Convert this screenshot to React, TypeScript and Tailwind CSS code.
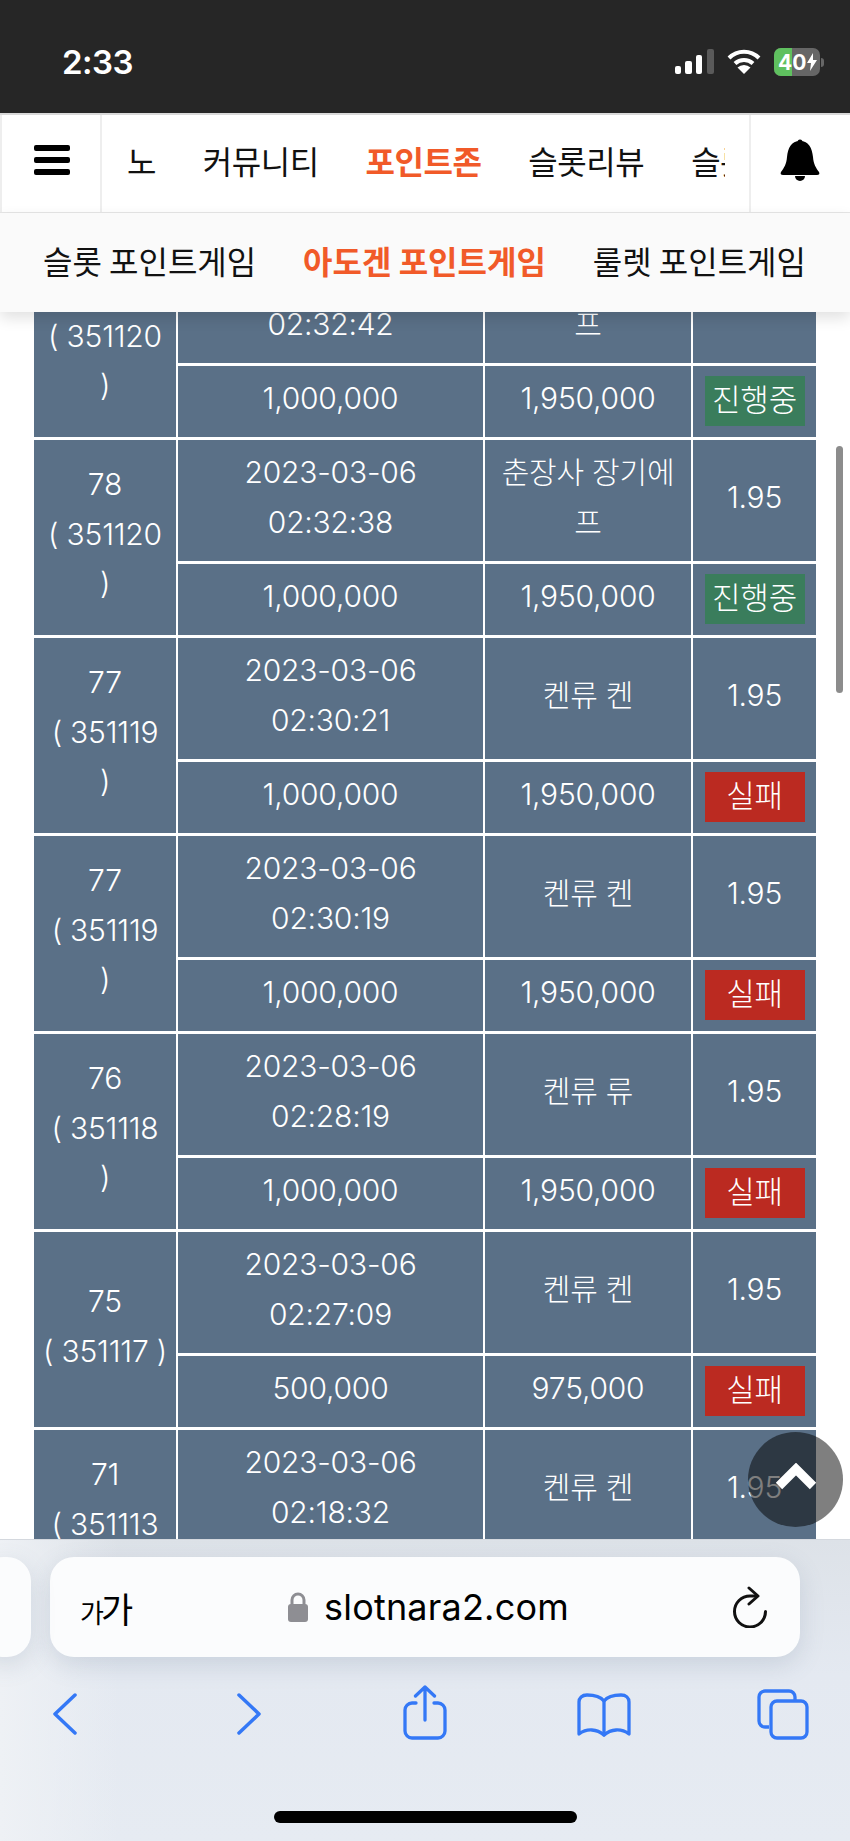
import React from "react";

const KR = "font-['Noto_Sans_CJK_KR','Noto_Sans',sans-serif]";
const NUM = "font-['Inter','Noto_Sans_CJK_KR',sans-serif]";

type Row = { no: string; id: string; date: string; time: string; game: string; bet: string; win: string; state: "진행중" | "실패"; tight?: boolean };

const rows: Row[] = [
  { no: "78", id: "351120", date: "2023-03-06", time: "02:32:42", game: "춘장사 장기에프", bet: "1,000,000", win: "1,950,000", state: "진행중" },
  { no: "78", id: "351120", date: "2023-03-06", time: "02:32:38", game: "춘장사 장기에프", bet: "1,000,000", win: "1,950,000", state: "진행중" },
  { no: "77", id: "351119", date: "2023-03-06", time: "02:30:21", game: "켄류 켄", bet: "1,000,000", win: "1,950,000", state: "실패" },
  { no: "77", id: "351119", date: "2023-03-06", time: "02:30:19", game: "켄류 켄", bet: "1,000,000", win: "1,950,000", state: "실패" },
  { no: "76", id: "351118", date: "2023-03-06", time: "02:28:19", game: "켄류 류", bet: "1,000,000", win: "1,950,000", state: "실패" },
  { no: "75", id: "351117", date: "2023-03-06", time: "02:27:09", game: "켄류 켄", bet: "500,000", win: "975,000", state: "실패", tight: true },
  { no: "71", id: "351113", date: "2023-03-06", time: "02:18:32", game: "켄류 켄", bet: "500,000", win: "975,000", state: "실패" },
];

const cell = "border-x-2 border-y-[3px] border-white bg-[#5a7087] text-center align-middle px-1 pt-[7px] pb-[13px]";

function StatusBar() {
  return (
    <div className="h-[113px] shrink-0 bg-[#262626] flex items-center justify-between pl-[62px] pr-[26px] pt-[11px] text-white">
      <span className="font-['Inter',sans-serif] text-[33px] font-semibold leading-none tracking-[-0.5px]">2:33</span>
      <div className="flex items-center">
        <svg width="40" height="26" viewBox="0 0 40 26" className="mr-[12px]">
          <rect x="0" y="17" width="6" height="8" rx="2" fill="#fff" />
          <rect x="10" y="12" width="7" height="13" rx="2" fill="#fff" />
          <rect x="21" y="6" width="6" height="19" rx="2" fill="#fff" />
          <rect x="32" y="0" width="7" height="25" rx="2" fill="#5a5a5a" />
        </svg>
        <svg width="34" height="26" viewBox="0 0 34 26" className="mr-[13px]">
          <path d="M2 9 A21 21 0 0 1 32 9" stroke="#fff" strokeWidth="4" fill="none" />
          <path d="M8 14.500 A13 13 0 0 1 26 14.500" stroke="#fff" strokeWidth="4" fill="none" />
          <path d="M17 25 L10.500 18.500 A9.500 9.500 0 0 1 23.500 18.500 Z" fill="#fff" />
        </svg>
        <div className="relative flex h-[28px] w-[46px] items-center overflow-hidden rounded-[7px] bg-[#666666]">
          <div className="absolute inset-y-0 left-0 w-[18px] bg-[#5fc05f]" />
          <span className="relative pl-[4px] font-['Inter',sans-serif] text-[21px] font-bold leading-none">40</span>
          <svg width="10" height="18" viewBox="0 0 10 18" className="relative ml-[1px]"><path d="M6 0 L0 10 H4 L3 18 L10 7 H6 Z" fill="#fff" /></svg>
        </div>
        <div className="ml-[1px] h-[9px] w-[3px] rounded-r-full bg-[#666666]" />
      </div>
    </div>
  );
}

function TopNav() {
  return (
    <nav className={`h-[101px] shrink-0 flex border-y-2 border-b-[#e6e6e6] border-t-[#d8d8d8] bg-white ${KR}`}>
      <div className="w-[102px] shrink-0 border-x-2 border-x-[#eeeeee] flex flex-col items-center justify-center gap-[6px] pb-[8px] pl-[1px]">
        <span className="block h-[6px] w-[36px] rounded-[2px] bg-black" />
        <span className="block h-[6px] w-[36px] rounded-[2px] bg-black" />
        <span className="block h-[6px] w-[36px] rounded-[2px] bg-black" />
      </div>
      <div className="flex min-w-0 flex-1 pl-[24px] pr-[24px]">
        <div className="min-w-0 flex-1 overflow-hidden">
          <div className="ml-[-57px] flex h-full items-center gap-[47px] whitespace-nowrap pb-[8px] text-[32px] leading-none tracking-[-0.5px] text-[#111111]">
            <span>카지노</span>
            <span>커뮤니티</span>
            <span className="font-bold text-[#f15a29]">포인트존</span>
            <span>슬롯리뷰</span>
            <span>슬롯후기</span>
          </div>
        </div>
      </div>
      <div className="w-[101px] shrink-0 border-l-2 border-l-[#eeeeee] flex items-center justify-center pb-[8px] pr-[1px]">
        <svg width="40" height="42" viewBox="0 0 40 42">
          <circle cx="20" cy="3" r="2.500" fill="#000" />
          <path d="M20 2 C11 2 8 9 7 18 C6.500 25 4 29 1 33 C0 35 1 36 3 36 H37 C39 36 40 35 39 33 C36 29 33.500 25 33 18 C32 9 29 2 20 2 Z" fill="#000" />
          <path d="M15 37 A5 5 0 0 0 25 37 Z" fill="#000" />
        </svg>
      </div>
    </nav>
  );
}

function SubNav() {
  return (
    <div className={`relative z-10 -mt-[1px] flex h-[99px] shrink-0 items-center justify-between whitespace-nowrap bg-[#fafafa] pb-[5px] pl-[43px] pr-[44px] text-[32px] leading-none text-[#111111] shadow-[0_6px_14px_rgba(0,0,0,0.12)] ${KR}`}>
      <span>슬롯 포인트게임</span>
      <span className="font-bold text-[#f15a29]">아도겐 포인트게임</span>
      <span>룰렛 포인트게임</span>
    </div>
  );
}

function Badge({ state }: { state: Row["state"] }) {
  return (
    <span className={`mx-auto mb-[2px] block h-[50px] w-[100px] text-[31px] leading-[48px] ${state === "실패" ? "bg-[#bb2a21]" : "bg-[#3a7d5c]"}`}>{state}</span>
  );
}

function Table() {
  return (
    <table className={`ml-[32px] mt-[-73px] w-[784px] table-fixed border-collapse text-[30px] font-light leading-[49.500px] tracking-[-0.2px] text-white ${NUM}`}>
      <colgroup>
        <col className="w-[144px]" />
        <col className="w-[307px]" />
        <col className="w-[208px]" />
        <col className="w-[125px]" />
      </colgroup>
      <tbody>
        {rows.map((r, i) => (
          <React.Fragment key={i}>
            <tr className="h-[124px]">
              <td rowSpan={2} className={cell}>
                {r.no}
                <br />
                {r.tight ? (
                  <span className="whitespace-nowrap">( {r.id} )</span>
                ) : (
                  <>
                    ( {r.id}
                    <br />)
                  </>
                )}
              </td>
              <td className={cell}>
                {r.date}
                <br />
                {r.time}
              </td>
              <td className={cell}>{r.game}</td>
              <td className={cell}>1.95</td>
            </tr>
            <tr className="h-[74px]">
              <td className={cell}>{r.bet}</td>
              <td className={cell}>{r.win}</td>
              <td className={`${cell} !px-0 !py-0`}>
                <Badge state={r.state} />
              </td>
            </tr>
          </React.Fragment>
        ))}
      </tbody>
    </table>
  );
}

function Content() {
  return (
    <main className="relative min-h-0 flex-1 overflow-hidden bg-white">
      <Table />
      <div className="absolute right-[7px] top-[134px] h-[247px] w-[7px] rounded-full bg-[#8c8c8c]" />
      <button className="absolute right-[7px] top-[1120px] flex h-[95px] w-[95px] items-center justify-center rounded-full bg-black/50">
        <svg width="42" height="28" viewBox="0 0 42 28" className="mb-[6px]">
          <path d="M4 23 L21 6 L38 23" stroke="#fff" strokeWidth="9" fill="none" />
        </svg>
      </button>
    </main>
  );
}

const blue = "#3478f6";

function SafariBar() {
  return (
    <div className="relative h-[302px] shrink-0 overflow-hidden border-t border-t-[#d4d8de] bg-[linear-gradient(90deg,#eef1f5_0%,transparent_14%),linear-gradient(180deg,#dde2e8_0%,#e4e9f1_45%,#e6ebf2_100%)]">
      <div className="absolute left-[-20px] top-[17px] h-[100px] w-[51px] rounded-[24px] bg-[#fbfcfd] shadow-[0_8px_24px_rgba(90,110,140,0.18)]" />
      <div className="mx-[50px] mt-[17px] flex h-[100px] w-[750px] items-center rounded-[24px] bg-[#fbfcfd] pl-[30px] pr-[32px] shadow-[0_8px_24px_rgba(90,110,140,0.18)]">
        <span className={`flex w-[56px] items-baseline text-black ${KR}`}>
          <span className="text-[26px] leading-none">가</span>
          <span className="ml-[-3px] text-[35px] leading-none">가</span>
        </span>
        <div className="flex flex-1 items-center justify-center pr-[12px]">
          <svg width="22" height="30" viewBox="0 0 22 30" className="mr-[15px]">
            <path d="M5 13 V8 A6 6 0 0 1 17 8 V13" stroke="#8e8e93" strokeWidth="3" fill="none" />
            <rect x="1" y="12" width="20" height="18" rx="3" fill="#8e8e93" />
          </svg>
          <span className="font-['Inter',sans-serif] text-[36px] leading-none tracking-[0.2px] text-black">slotnara2.com</span>
        </div>
        <svg width="36" height="42" viewBox="0 0 36 42" fill="none" stroke="#111" strokeWidth="3" strokeLinecap="round" strokeLinejoin="round">
          <path d="M25 10 H18 A15.500 15.500 0 1 0 33.500 25.500" />
          <path d="M17 2 L26 10 L17 18" />
        </svg>
      </div>
      <div className="flex items-start pl-[53px] pt-[28px]">
        <svg width="24" height="42" viewBox="0 0 24 42" fill="none" stroke={blue} strokeWidth="3.500" strokeLinecap="round" strokeLinejoin="round" className="mt-[8px]">
          <path d="M22 2 L2 21 L22 40" />
        </svg>
        <svg width="24" height="42" viewBox="0 0 24 42" fill="none" stroke={blue} strokeWidth="3.500" strokeLinecap="round" strokeLinejoin="round" className="ml-[160px] mt-[8px]">
          <path d="M2 2 L22 21 L2 40" />
        </svg>
        <svg width="44" height="55" viewBox="0 0 44 55" fill="none" stroke={blue} strokeWidth="3.300" strokeLinecap="round" strokeLinejoin="round" className="ml-[142px]">
          <path d="M22 35 V2 M12.500 11 L22 2 L31.500 11" />
          <path d="M13 18 H9 A7 7 0 0 0 2 25 V46 A7 7 0 0 0 9 53 H35 A7 7 0 0 0 42 46 V25 A7 7 0 0 0 35 18 H31" />
        </svg>
        <svg width="54" height="45" viewBox="0 0 54 45" fill="none" stroke={blue} strokeWidth="3.300" strokeLinecap="round" strokeLinejoin="round" className="ml-[130px] mt-[8px]">
          <path d="M27 8 C23 3 16 2 10 2 C5 2 2 5 2 9 V41 C10 35 20 36 27 42 C34 36 44 35 52 41 V9 C52 5 49 2 44 2 C38 2 31 3 27 8 Z" />
          <path d="M27 8 V42" />
        </svg>
        <svg width="52" height="51" viewBox="0 0 52 51" fill="none" stroke={blue} strokeWidth="3.300" strokeLinejoin="round" className="ml-[126px] mt-[4px]">
          <path d="M12 38 H8 A6 6 0 0 1 2 32 V8 A6 6 0 0 1 8 2 H32 A6 6 0 0 1 38 8 V12" />
          <rect x="14" y="12" width="36" height="37" rx="6" />
        </svg>
      </div>
      <div className="absolute left-[274px] top-[271px] h-[12px] w-[303px] rounded-full bg-black" />
    </div>
  );
}

export default function App() {
  return (
    <div className="flex h-[1841px] w-[850px] flex-col overflow-hidden bg-white">
      <StatusBar />
      <TopNav />
      <SubNav />
      <Content />
      <SafariBar />
    </div>
  );
}
